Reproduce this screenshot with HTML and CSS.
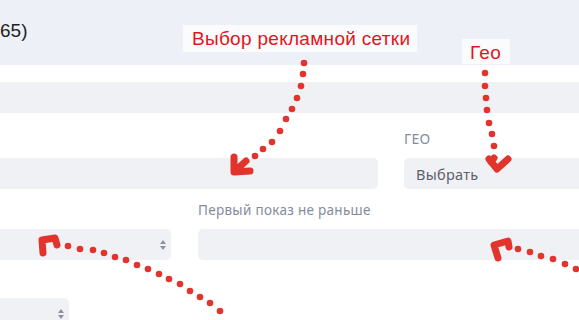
FILE: index.html
```html
<!DOCTYPE html>
<html lang="ru">
<head>
<meta charset="utf-8">
<link rel="stylesheet" href="styles.css">
</head>
<body>
<div class="page">
  <header class="topband"><span class="count">65)</span></header>
  <div class="gap17"></div>
  <div class="bar"></div>

  <div class="row row-a">
    <div class="field f-net">
      <div class="label"></div>
      <div class="input"></div>
    </div>
    <div class="field f-geo">
      <div class="label">ГЕО</div>
      <div class="input select"><span class="value">Выбрать</span></div>
    </div>
  </div>

  <div class="row row-b">
    <div class="field f-small">
      <div class="label"></div>
      <div class="input select"><span class="arrows"><i class="up"></i><i class="down"></i></span></div>
    </div>
    <div class="field f-first">
      <div class="label">Первый показ не раньше</div>
      <div class="input"></div>
    </div>
  </div>

  <div class="row row-c">
    <div class="field f-tiny">
      <div class="input select"><span class="arrows"><i class="up"></i><i class="down"></i></span></div>
    </div>
  </div>

  <div class="note note-net">Выбор рекламной сетки</div>
  <div class="note note-geo">Гео</div>

  <svg class="arrows-layer" width="579" height="320" viewBox="0 0 579 320">
    <g fill="#e1342d">
      <circle cx="304" cy="63" r="3.3"/><circle cx="303" cy="74" r="3.3"/><circle cx="301" cy="86" r="3.3"/>
      <circle cx="297" cy="98" r="3.3"/><circle cx="292" cy="109" r="3.3"/><circle cx="286" cy="119" r="3.3"/>
      <circle cx="280" cy="131" r="3.3"/><circle cx="272" cy="142" r="3.3"/><circle cx="263" cy="149" r="3.3"/>
      <circle cx="255" cy="156" r="3.3"/>

      <circle cx="485" cy="73" r="3.3"/><circle cx="485" cy="86" r="3.3"/><circle cx="486" cy="98" r="3.3"/>
      <circle cx="487" cy="110" r="3.3"/><circle cx="489" cy="123" r="3.3"/><circle cx="492" cy="134" r="3.3"/>
      <circle cx="494" cy="146" r="3.3"/>

      <circle cx="68" cy="246" r="3.3"/><circle cx="80" cy="249" r="3.3"/><circle cx="93" cy="250" r="3.3"/>
      <circle cx="104" cy="253" r="3.3"/><circle cx="115" cy="257" r="3.3"/><circle cx="126" cy="260" r="3.3"/>
      <circle cx="137" cy="265" r="3.3"/><circle cx="148" cy="269" r="3.3"/><circle cx="159" cy="274" r="3.3"/>
      <circle cx="169" cy="279" r="3.3"/><circle cx="180" cy="284" r="3.3"/><circle cx="190" cy="291" r="3.3"/>
      <circle cx="200" cy="297" r="3.3"/><circle cx="210" cy="303" r="3.3"/><circle cx="220" cy="311" r="3.3"/>

      <circle cx="518" cy="249" r="3.3"/><circle cx="530" cy="252" r="3.3"/><circle cx="541" cy="256" r="3.3"/>
      <circle cx="553" cy="259" r="3.3"/><circle cx="565" cy="264" r="3.3"/><circle cx="576" cy="269" r="3.3"/>
    </g>
    <g fill="none" stroke="#e1342d" stroke-width="7" stroke-linecap="round" stroke-linejoin="round">
      <path d="M234 157 L234 172 L250 171 M235 171 L246 161"/>
      <path d="M489 159 L497 169 L508 159 M491 162 L494 158"/>
      <path d="M43 253 L42 240 L55 238 L57 245"/>
      <path d="M498 258 L494 245 L508 241 L509 247"/>
    </g>
  </svg>
</div>
</body>
</html>
```

FILE: styles.css
```css
* { box-sizing: border-box; }
html, body { margin: 0; padding: 0; background: #ffffff; }
body { width: 579px; height: 320px; overflow: hidden; font-family: "Noto Sans", "Liberation Sans", sans-serif; }
.page { position: relative; width: 579px; height: 320px; overflow: hidden; }

.topband { height: 65px; background: #edf0f7; display: flex; align-items: flex-start; padding-top: 19px; }
.count { font-family: "Liberation Sans", Arial, sans-serif; font-size: 19px; color: #1e1f24; margin-left: 0; line-height: 24px; }
.gap17 { height: 17px; }
.bar { height: 31px; background: #f0f1f4; }

.row { display: flex; align-items: flex-start; }
.field { display: flex; flex-direction: column; flex: none; }
.label { height: 27px; font-size: 13.5px; line-height: 16px; color: #858c9c; letter-spacing: 0.3px; }
.input { height: 31px; background: #f0f1f4; border-radius: 5px; position: relative; display: flex; align-items: center; }

.row-a { padding-top: 18px; gap: 26px; }
.f-net { width: 378px; }
.f-net .input { border-radius: 0 5px 5px 0; }
.f-geo { width: 190px; }
.f-geo .label { font-size: 14px; }
.value { padding-left: 12px; font-size: 14.5px; color: #5d616d; letter-spacing: 0.3px; }

.row-b { padding-top: 13px; gap: 27px; }
.f-small { width: 171px; }
.f-small .input, .f-tiny .input { border-radius: 0 5px 5px 0; }
.f-first { width: 400px; }

.row-c { padding-top: 38px; }
.f-tiny { width: 69px; }

.arrows { position: absolute; right: 5px; top: 50%; transform: translateY(-50%); display: flex; flex-direction: column; gap: 2px; }
.arrows i { display: block; width: 0; height: 0; border-left: 3px solid transparent; border-right: 3px solid transparent; }
.arrows .up { border-bottom: 4px solid #8d92a2; }
.arrows .down { border-top: 4px solid #8d92a2; }

.note { position: absolute; background: #fafbfd; color: #e2141c; font-family: "Liberation Sans", Arial, sans-serif; font-size: 19px; line-height: 20px; letter-spacing: 0.3px; padding: 4px 0 0 9px; z-index: 2; white-space: nowrap; }
.note-net { left: 183px; top: 25px; width: 234px; height: 27px; }
.note-geo { left: 462px; top: 39px; width: 48px; height: 25px; padding-top: 4px; padding-left: 8px; }

.arrows-layer { position: absolute; left: 0; top: 0; z-index: 3; pointer-events: none; }
```
